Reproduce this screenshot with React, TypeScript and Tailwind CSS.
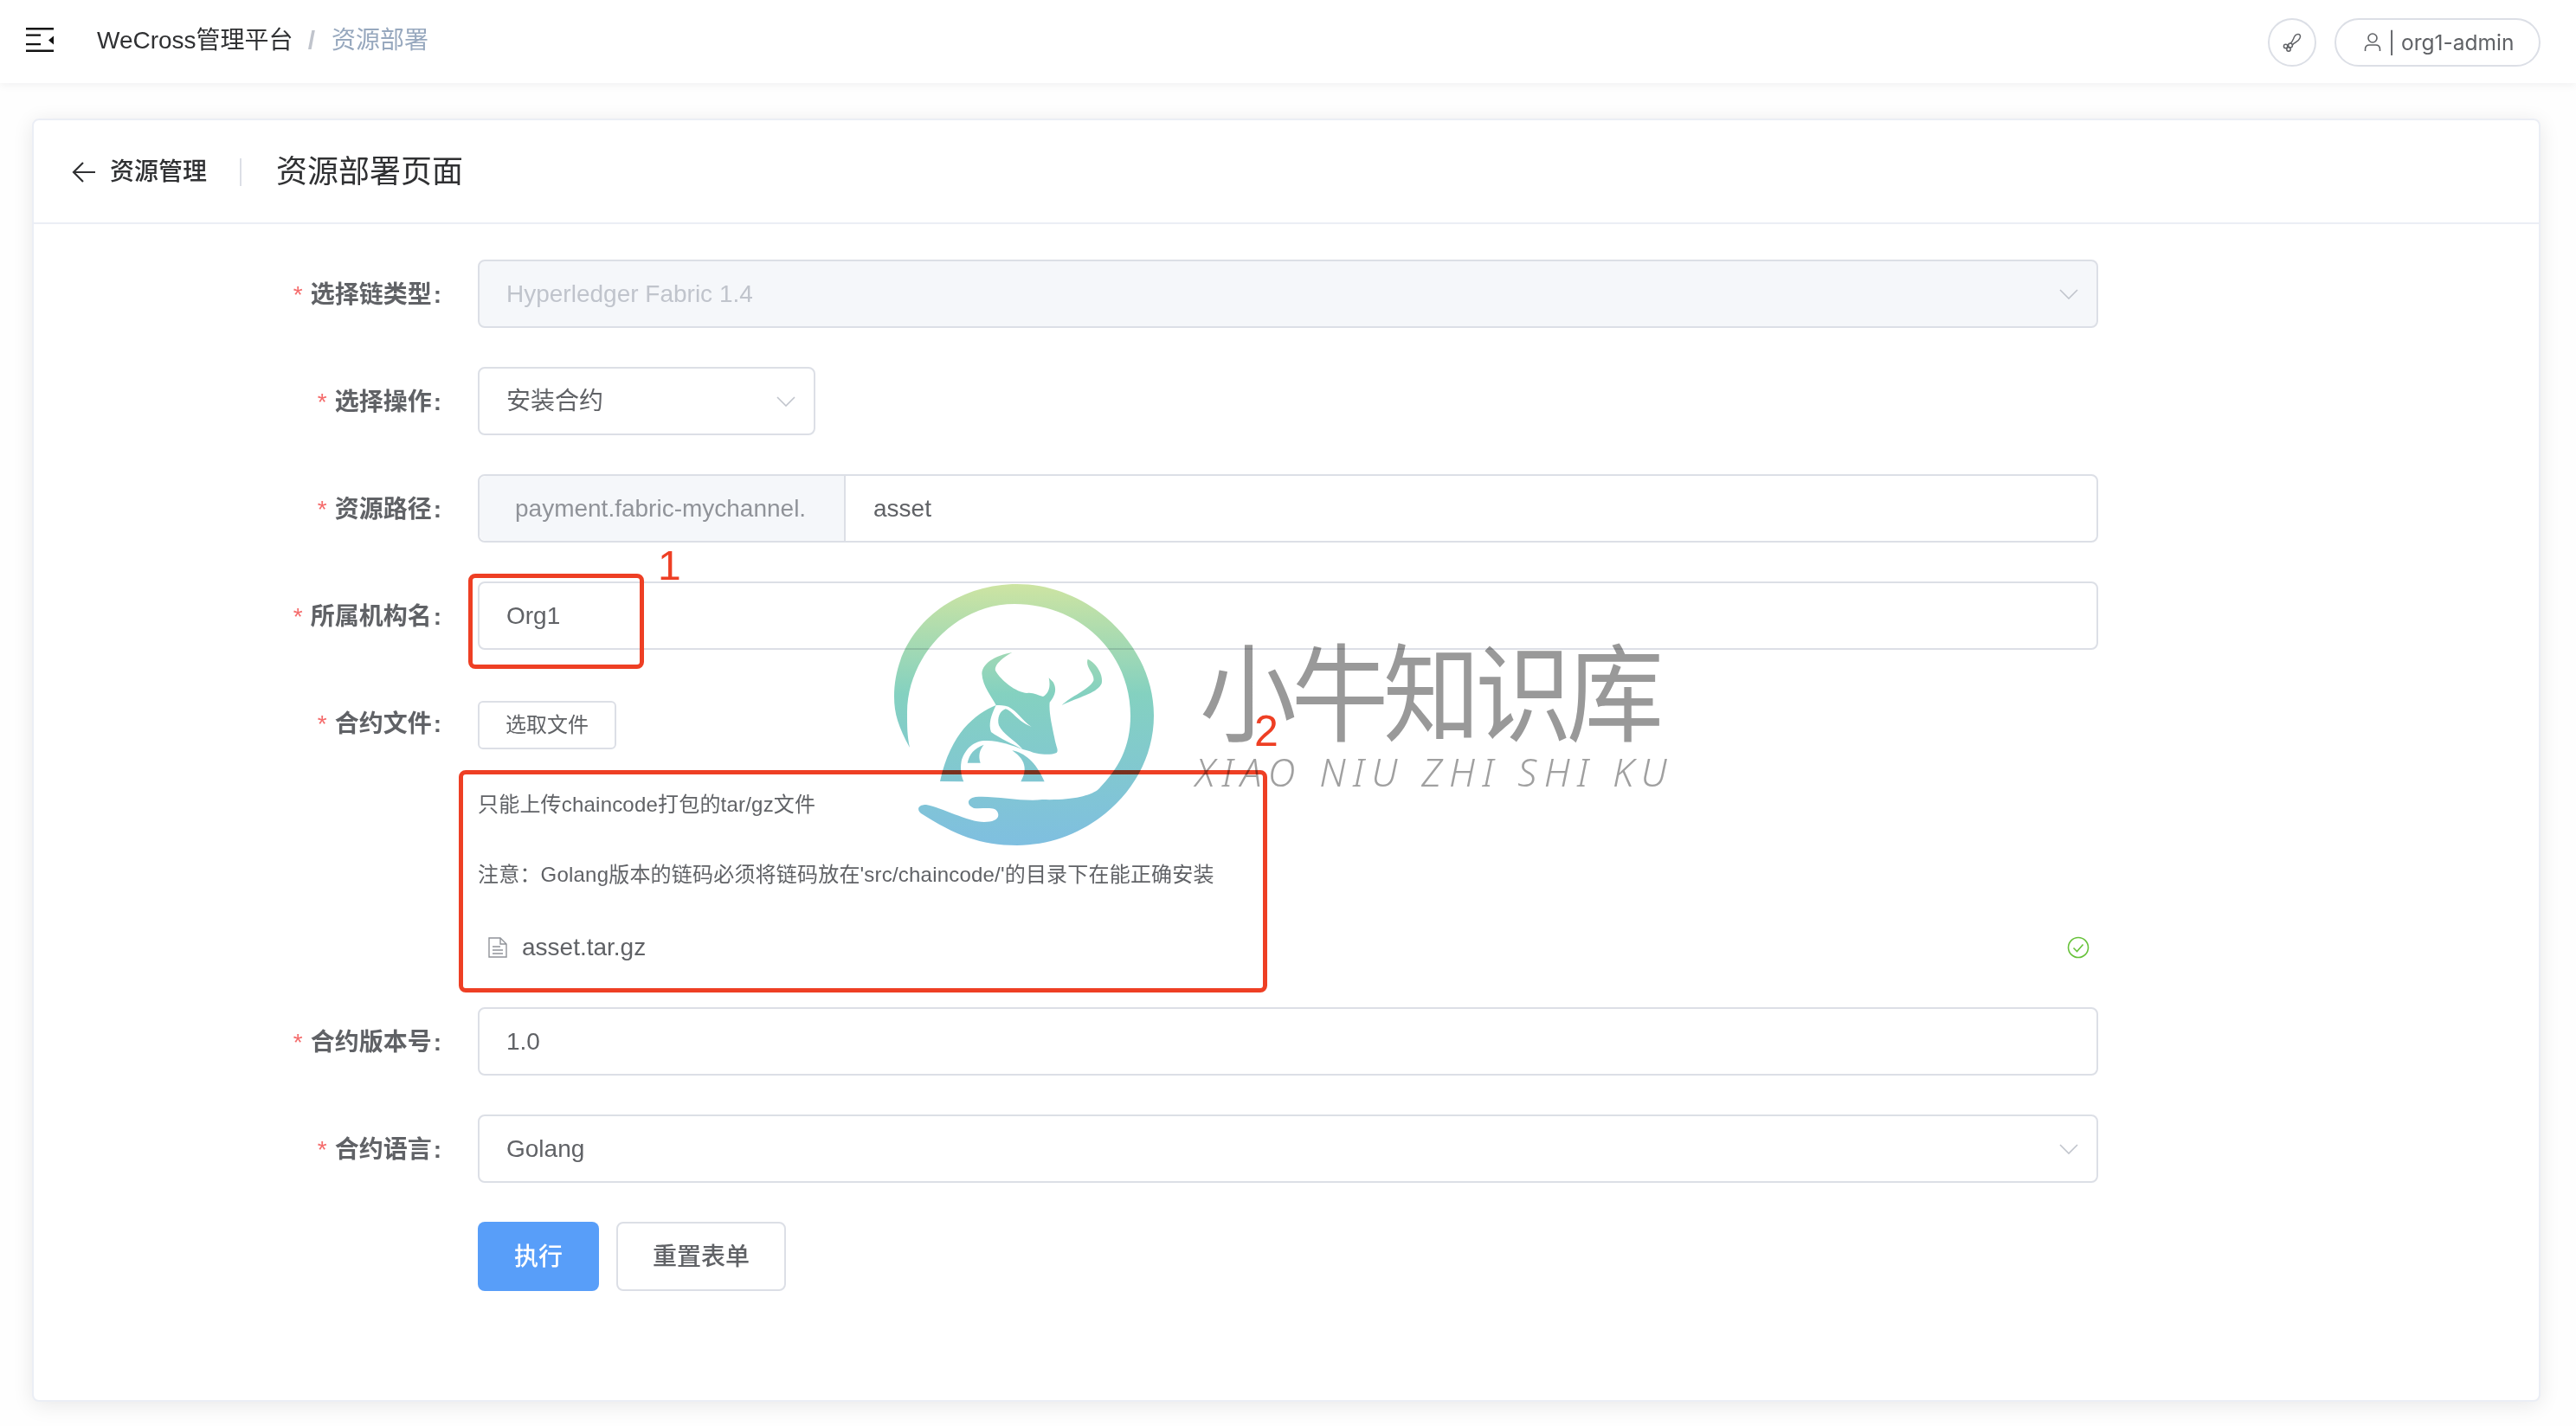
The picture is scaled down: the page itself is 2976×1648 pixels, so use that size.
const Star = () => <span className="text-[#f56c6c] mr-[9px] font-normal">*</span>;

const Chevron = () => (
  <svg className="mr-[-10px]" width="22" height="12" viewBox="0 0 22 12" fill="none" stroke="#c0c4cc" strokeWidth="1.6">
    <path d="M1 1l10 10L21 1" />
  </svg>
);

const Label = ({ text }: { text: string }) => (
  <div className="w-[471px] mr-[42px] h-[79px] pt-[2px] flex items-center justify-end font-semibold text-[#606266] text-[28px] shrink-0">
    <Star />
    {text}
    <span className="ml-[2px]">:</span>
  </div>
);

const Row = ({ label, children }: { label: string; children: React.ReactNode }) => (
  <div className="flex items-start mb-[45px]">
    <Label text={label} />
    {children}
  </div>
);

const boxCls = 'h-[79px] border-2 border-[#dcdfe6] rounded-lg flex items-center px-[31px] text-[28px] text-[#606266]';

const Logo = () => (
  <svg width="300" height="302" viewBox="0 0 300 302" className="absolute left-[1033px] top-[675px] mix-blend-multiply pointer-events-none">
    <defs>
      <linearGradient id="wm" gradientUnits="userSpaceOnUse" x1="0" y1="0" x2="0" y2="302">
        <stop offset="0" stopColor="#cde4a2" />
        <stop offset="0.42" stopColor="#84d1c0" />
        <stop offset="1" stopColor="#7fbfe0" />
      </linearGradient>
      <linearGradient id="wm2" gradientUnits="userSpaceOnUse" x1="0" y1="-195" x2="0" y2="711">
        <stop offset="0" stopColor="#cde4a2" />
        <stop offset="0.42" stopColor="#84d1c0" />
        <stop offset="1" stopColor="#7fbfe0" />
      </linearGradient>
    </defs>
    {/* ring and hand */}
    <path
      fill="url(#wm)"
      d="M18 189C5 165 0 150 0 130C0 55 65 0 142 0C225 0 300 70 300 152C300 235 225 302 142 302C100 302 70 290 31 265C26 261 27 255 37 255C55 258 85 275 104 275C114 275 122 272 120 265C118 256 105 260 92 259C84 256 83 248 94 246C115 244 150 252 171 249C205 250 225 245 235 238C258 215 273 190 273 152C273 80 215 23 139 23C70 23 15 85 15 148C15 165 15 175 18 189Z"
    />
    {/* bull */}
    <g transform="translate(57 65) scale(0.3333)">
      <path
        fill="url(#wm2)"
        d="M238 42C190 50 135 75 133 115C135 160 170 200 182 225C110 255 25 320 -12 489L70 490C60 470 58 440 62 420C70 385 100 350 140 348C190 345 240 365 275 378L300 385C320 395 370 400 392 390C400 380 390 370 385 340C375 290 365 250 368 215C385 195 395 170 380 145L365 130C372 160 365 185 345 195C325 190 310 180 290 183C250 180 200 140 180 105C175 85 205 60 238 42Z"
      />
      <path
        fill="#ffffff"
        d="M182 225C165 260 155 290 165 318C195 340 240 360 275 378C245 345 205 325 192 295C185 270 195 245 215 238C240 245 255 280 305 300C275 280 255 245 225 230C210 225 195 225 182 225Z"
      />
      <path fill="url(#wm2)" d="M238 382C280 390 320 420 350 490L268 490C285 460 295 420 238 382Z" />
      <path fill="url(#wm2)" d="M140 362C105 375 90 395 83 425L128 425C120 400 125 380 140 362Z" />
      <path fill="url(#wm2)" d="M500 65C530 80 555 120 548 150C530 185 470 195 410 225C440 195 505 170 520 140C525 115 490 95 500 65Z" />
    </g>
  </svg>
);

export default function App() {
  return (
    <div className="relative w-[2976px] h-[1648px] overflow-hidden bg-[#fefefe] font-['Liberation_Sans','Noto_Sans_CJK_SC',sans-serif]">
      {/* top bar */}
      <header className="h-[96px] bg-white shadow-[0_2px_10px_rgba(0,21,41,0.06)] flex items-center pl-[30px] pr-[41px]">
        <svg width="32" height="28" viewBox="0 0 32 28" className="mb-[4px]">
          <path d="M0 0h32v2.5H0zM0 7.5h17v2.2H0zM0 18h17v2.2H0zM0 25.5h32V28H0zM32 9.6v10l-6-5z" fill="#111" />
        </svg>
        <div className="ml-[50px] flex items-center text-[28px] mb-[3px]">
          <span className="text-[#303133]">WeCross管理平台</span>
          <span className="ml-[17px] mr-[19px] text-[30px] text-[#c0c4cc] font-bold">/</span>
          <span className="text-[#97a8be]">资源部署</span>
        </div>
        <div className="ml-auto mt-[2px] flex items-center gap-[21px]">
          <div className="w-[56px] h-[56px] rounded-full border-2 border-[#dcdfe6] flex items-center justify-center">
            <svg width="22" height="22" viewBox="0 0 22 22" fill="none" stroke="#606266" strokeWidth="1.5">
              <path d="M9 12c1.500-1 2.500-2.500 3.500-5C13.500 4 15.500 1.500 18 1.500c2.500 0 3 2.500 2 4.500-1 2.500-3 4-5 5-1.500.8-3 1.800-3.500 3" />
              <circle cx="9" cy="14.500" r="2.400" />
              <circle cx="3.600" cy="15.500" r="2.200" />
              <circle cx="7" cy="19" r="2.200" />
            </svg>
          </div>
          <div className="w-[238px] h-[56px] rounded-full border-2 border-[#dcdfe6] flex items-center pl-[32px] text-[24.500px] text-[#606266] font-['Inter','Noto_Sans_CJK_SC',sans-serif]">
            <svg width="20" height="22" viewBox="0 0 20 22" fill="none" stroke="#606266" strokeWidth="1.6" className="mr-[8px]">
              <circle cx="10" cy="6" r="5" />
              <path d="M1.500 21v-2c0-3 2-5 5-5h7c3 0 5 2 5 5v2" />
            </svg>
            | org1-admin
          </div>
        </div>
      </header>

      {/* card */}
      <main className="mt-[41px] ml-[37px] w-[2898px] h-[1483px] bg-white border-2 border-[#ebeef5] rounded-lg shadow-[0_4px_24px_rgba(0,0,0,0.09)]">
        <div className="h-[120px] border-b-2 border-[#ebeef5] flex items-center pl-[44px] pt-[2px]">
          <svg width="28" height="26" viewBox="0 0 28 26" fill="none" stroke="#303133" strokeWidth="2.2">
            <path d="M27 13H2M13 2L2 13l11 11" />
          </svg>
          <span className="ml-[16px] text-[28px] font-medium text-[#303133]">资源管理</span>
          <span className="ml-[38px] w-[2px] h-[32px] bg-[#dcdfe6]" />
          <span className="ml-[40px] text-[36px] text-[#303133]">资源部署页面</span>
        </div>

        <form className="pt-[41px]">
          <Row label="选择链类型">
            <div className={`${boxCls} w-[1872px] bg-[#f5f7fa] justify-between text-[#c0c4cc]`}>
              Hyperledger Fabric 1.4
              <Chevron />
            </div>
          </Row>
          <Row label="选择操作">
            <div className={`${boxCls} w-[390px] justify-between`}>
              安装合约
              <Chevron />
            </div>
          </Row>
          <Row label="资源路径">
            <div className="w-[1872px] h-[79px] border-2 border-[#dcdfe6] rounded-lg flex text-[28px]">
              <div className="w-[423px] bg-[#f5f7fa] border-r-2 border-[#dcdfe6] rounded-l-lg flex items-center pl-[41px] text-[#909399]">
                payment.fabric-mychannel.
              </div>
              <div className="flex items-center pl-[32px] text-[#606266]">asset</div>
            </div>
          </Row>
          <Row label="所属机构名">
            <div className={`${boxCls} w-[1872px]`}>Org1</div>
          </Row>

          {/* upload */}
          <div className="flex items-start mb-[47px]">
            <Label text="合约文件" />
            <div className="w-[1872px] pt-[14px]">
              <div className="w-[160px] h-[56px] border-2 border-[#dcdfe6] rounded-md flex items-center justify-center text-[24px] text-[#606266]">
                选取文件
              </div>
              <p className="mt-[43px] h-[42px] leading-[42px] text-[24px] tracking-[0.2px] text-[#606266]">只能上传chaincode打包的tar/gz文件</p>
              <p className="mt-[39px] h-[42px] leading-[42px] text-[24px] tracking-[0.2px] text-[#606266]">注意：Golang版本的链码必须将链码放在'src/chaincode/'的目录下在能正确安装</p>
              <div className="mt-[41px] h-[44px] flex items-center text-[28px] text-[#606266]">
                <svg width="22" height="24" viewBox="0 0 22 24" fill="none" stroke="#909399" strokeWidth="1.4" className="ml-[12px]">
                  <path d="M1 1h13l7 7v15H1zM14 1v7h7M5 11h9M5 15h12M5 19h12" />
                </svg>
                <span className="ml-[17px]">asset.tar.gz</span>
                <svg width="26" height="26" viewBox="0 0 26 26" fill="none" stroke="#67c23a" strokeWidth="1.6" className="ml-auto mr-[10px]">
                  <circle cx="13" cy="13" r="11.500" />
                  <path d="M7.500 13.500l4 4 7-8" />
                </svg>
              </div>
            </div>
          </div>

          <Row label="合约版本号">
            <div className={`${boxCls} w-[1872px]`}>1.0</div>
          </Row>
          <Row label="合约语言">
            <div className={`${boxCls} w-[1872px] justify-between`}>
              Golang
              <Chevron />
            </div>
          </Row>

          <div className="flex pl-[513px] gap-[20px]">
            <button type="button" className="w-[140px] h-[80px] pt-[2px] rounded-lg bg-[#589ef9] text-white text-[28px] font-medium">执行</button>
            <button type="button" className="w-[196px] h-[80px] pt-[2px] rounded-lg border-2 border-[#dcdfe6] bg-white text-[#606266] text-[28px] font-medium">重置表单</button>
          </div>
        </form>
      </main>

      {/* annotations on top of the screenshot */}
      <div className="absolute left-[541px] top-[663px] w-[203px] h-[110px] border-[5px] border-[#ee3f24] rounded-lg" />
      <div className="absolute left-[530px] top-[890px] w-[934px] h-[257px] border-[5px] border-[#ee3f24] rounded-lg" />
      <span className="absolute left-[760px] top-[630px] text-[48px] leading-[48px] text-[#ee3f24]">1</span>

      {/* watermark */}
      <Logo />
      <div className="absolute left-[1386px] top-[718px] text-[112px] leading-[150px] tracking-[-6px] text-[#999999] font-['Noto_Sans_CJK_SC',sans-serif] font-normal scale-y-110 mix-blend-multiply whitespace-nowrap">
        小牛知识库
      </div>
      <div className="absolute left-[1381px] top-[864px] text-[44px] leading-[56px] tracking-[8.200px] text-[#a0a0a0] font-['Noto_Sans',sans-serif] font-light italic mix-blend-multiply whitespace-nowrap">
        XIAO NIU ZHI SHI KU
      </div>
      <span className="absolute left-[1449px] top-[820px] text-[50px] leading-[50px] text-[#ee3f24]">2</span>
    </div>
  );
}
